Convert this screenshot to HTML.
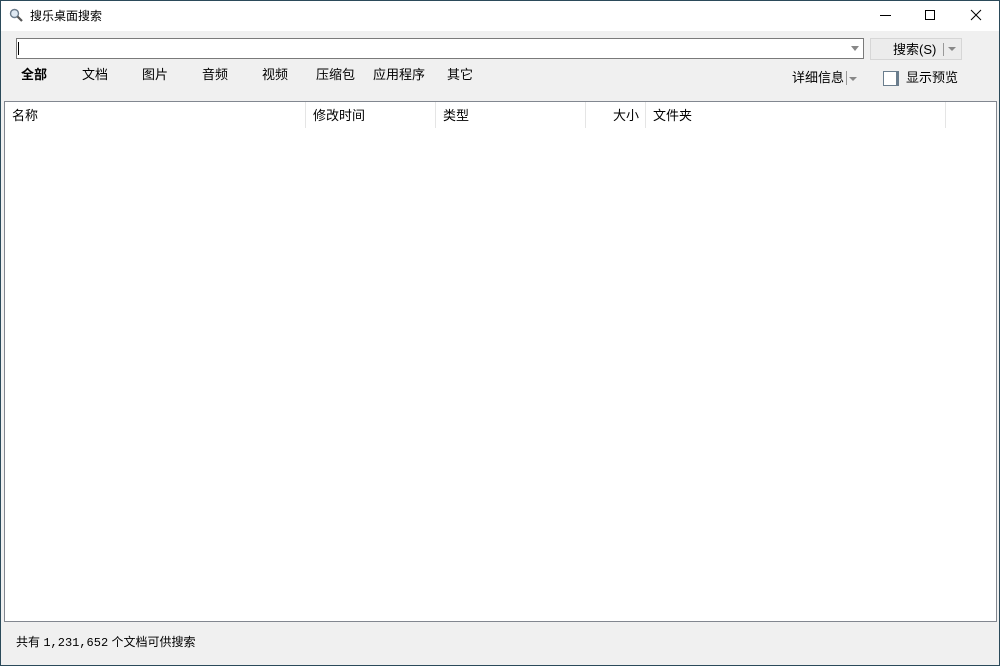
<!DOCTYPE html>
<html><head><meta charset="utf-8"><style>
*{box-sizing:border-box;margin:0;padding:0}
body{width:1000px;height:666px;overflow:hidden;font-family:"Liberation Sans","Microsoft YaHei","Noto Sans CJK SC",sans-serif;font-size:12px;color:#000;background:#f0f0f0;position:relative}
.win{position:absolute;left:0;top:0;width:1000px;height:666px;border:1px solid #2b4a5a;background:#f0f0f0}
.title{position:absolute;left:0;top:0;width:998px;height:30px;background:#fff}
.abs{position:absolute;white-space:nowrap}
.inp{position:absolute;left:15px;top:37px;width:848px;height:21px;background:#fff;border:1px solid #7a7a7a}
.btn{position:absolute;left:869px;top:37px;width:92px;height:22px;background:#ececec;border:1px solid #d6d6d6}
.list{position:absolute;left:3px;top:100px;width:993px;height:521px;background:#fff;border:1px solid #828790}
.hd{position:absolute;top:0;height:26px;border-right:1px solid #e5e5e5;line-height:27px;padding-left:7px;font-size:13px}
.tab{position:absolute;top:63px;font-size:13px}
</style></head><body><div class="win">
<div class="title">
<svg class="abs" style="left:8px;top:7px" width="14" height="14" viewBox="0 0 14 14"><circle cx="5.5" cy="5.5" r="4" fill="#dfe9f3" stroke="#6c7c8c" stroke-width="1.4"/><path d="M8.5 8.5L13 13" stroke="#555" stroke-width="2.2"/></svg>
<div class="abs" style="left:29px;top:6px;font-size:12px">搜乐桌面搜索</div>
<div class="abs" style="left:879px;top:14px;width:11px;height:1px;background:#000"></div>
<div class="abs" style="left:924px;top:9px;width:10px;height:10px;border:1px solid #000"></div>
<svg class="abs" style="left:969px;top:8px" width="12" height="12"><path d="M1 1L11 11M11 1L1 11" stroke="#000" stroke-width="1"/></svg>
</div>
<div class="inp"><div class="abs" style="left:1px;top:3px;width:1px;height:13px;background:#000"></div>
<div class="abs" style="left:834px;top:7px;width:0;height:0;border-left:4px solid transparent;border-right:4px solid transparent;border-top:5px solid #888"></div></div>
<div class="btn"><div class="abs" style="left:22px;top:0px;font-size:13px">搜索(S)</div>
<div class="abs" style="left:72px;top:4px;width:1px;height:13px;background:#999"></div>
<div class="abs" style="left:77px;top:8px;border-left:4px solid transparent;border-right:4px solid transparent;border-top:4px solid #888"></div></div>
<div class="tab" style="left:20px;font-weight:bold">全部</div>
<div class="tab" style="left:81px">文档</div>
<div class="tab" style="left:141px">图片</div>
<div class="tab" style="left:201px">音频</div>
<div class="tab" style="left:261px">视频</div>
<div class="tab" style="left:315px">压缩包</div>
<div class="tab" style="left:372px">应用程序</div>
<div class="tab" style="left:446px">其它</div>
<div class="abs" style="left:791px;top:66px;font-size:13px">详细信息</div>
<div class="abs" style="left:845px;top:70px;width:1px;height:14px;background:#999"></div>
<div class="abs" style="left:848px;top:76px;border-left:4px solid transparent;border-right:4px solid transparent;border-top:4px solid #888"></div>
<div class="abs" style="left:882px;top:70px;width:16px;height:15px;border:1px solid #6a7d8d;background:#fff;border-right-width:3px"></div>
<div class="abs" style="left:905px;top:66px;font-size:13px">显示预览</div>
<div class="list">
<div class="hd" style="left:0;width:301px">名称</div>
<div class="hd" style="left:301px;width:130px">修改时间</div>
<div class="hd" style="left:431px;width:150px">类型</div>
<div class="hd" style="left:581px;width:60px;text-align:right;padding-right:6px">大小</div>
<div class="hd" style="left:641px;width:300px">文件夹</div>
</div>
<div class="abs" style="left:15px;top:632px;font-size:12px">共有 <span style="font-family:'Liberation Mono',monospace">1,231,652</span> 个文档可供搜索</div>
</div></body></html>
